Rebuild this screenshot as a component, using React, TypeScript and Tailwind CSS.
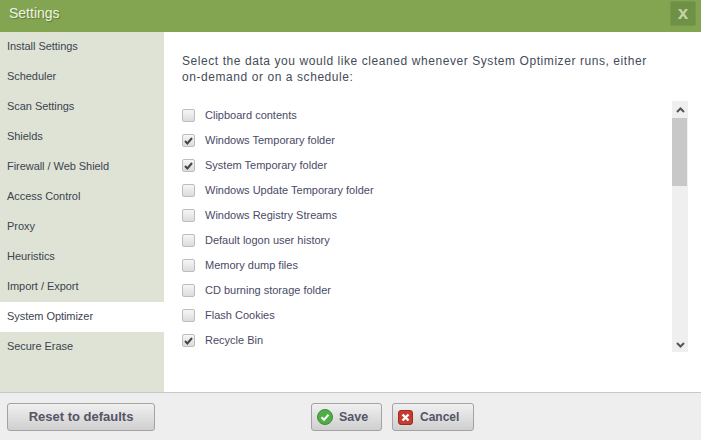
const navItems = [
  'Install Settings',
  'Scheduler',
  'Scan Settings',
  'Shields',
  'Firewall / Web Shield',
  'Access Control',
  'Proxy',
  'Heuristics',
  'Import / Export',
  'System Optimizer',
  'Secure Erase',
];

const cleanItems = [
  { label: 'Clipboard contents', checked: false },
  { label: 'Windows Temporary folder', checked: true },
  { label: 'System Temporary folder', checked: true },
  { label: 'Windows Update Temporary folder', checked: false },
  { label: 'Windows Registry Streams', checked: false },
  { label: 'Default logon user history', checked: false },
  { label: 'Memory dump files', checked: false },
  { label: 'CD burning storage folder', checked: false },
  { label: 'Flash Cookies', checked: false },
  { label: 'Recycle Bin', checked: true },
];

const buttonClass =
  'flex h-[28px] items-center rounded-[3px] border border-[#a3a3a3] bg-gradient-to-b from-[#f0f0f0] to-[#cfcfcf] font-bold text-[#555566]';

function App() {
  return (
    <div className="flex h-[440px] w-[701px] flex-col overflow-hidden bg-white font-['Liberation_Sans',sans-serif]">
      <div className="flex h-[32px] items-start justify-between bg-[#83a552] pl-[9px] pr-[5px]">
        <span className="mt-[4px] text-[14px] leading-[18px] text-[#eef3e4] [text-shadow:1px_1px_1px_#5a7a30]">
          Settings
        </span>
        <button className="mt-[1px] flex h-[25px] w-[26px] items-center justify-center rounded-[2px] border border-[#76964a] bg-[#6f9146] pb-[3px] text-[19px] leading-none font-bold text-[#c3d3a8]">
          x
        </button>
      </div>

      <div className="flex min-h-0 flex-1">
        <div className="w-[164px] bg-[#dfe3d5]">
          {navItems.map((item) => (
            <div
              key={item}
              className={`flex h-[30px] items-center pb-[2px] pl-[7px] text-[11px] tracking-[-0.05px] text-[#3c4450] ${
                item === 'System Optimizer' ? 'bg-white' : ''
              }`}
            >
              {item}
            </div>
          ))}
        </div>

        <div className="min-w-0 flex-1 pl-[18px] pt-[21px]">
          <p className="w-[490px] text-[12px] leading-[16px] tracking-[0.57px] text-[#444c58]">
            Select the data you would like cleaned whenever System Optimizer
            runs, either
            <br />
            on-demand or on a schedule:
          </p>
          <div className="mt-[16px] flex h-[251px]">
            <div className="w-[490px] pt-[2px]">
              {cleanItems.map((item) => (
                <div key={item.label} className="flex h-[25px] items-center">
                  <span className="flex h-[13px] w-[13px] items-center justify-center rounded-[2px] border border-[#bdbdbd] bg-gradient-to-b from-[#f6f6f6] to-[#dcdcdc]">
                    {item.checked && (
                      <svg width="9" height="8" viewBox="0 0 9 8">
                        <path d="M1 4 3.4 6.5 8 1" fill="none" stroke="#444444" strokeWidth="2" />
                      </svg>
                    )}
                  </span>
                  <span className="ml-[10px] text-[11px] text-[#4a4a66]">
                    {item.label}
                  </span>
                </div>
              ))}
            </div>
            <div className="flex w-[16px] flex-col bg-[#efefef]">
              <div className="flex h-[17px] justify-center pt-[6px]">
                <svg width="9" height="6" viewBox="0 0 9 6">
                  <path d="M1 5 4.5 1.5 8 5" fill="none" stroke="#555555" strokeWidth="2" />
                </svg>
              </div>
              <div className="h-[68px] w-[15px] bg-[#c8c8c8]" />
              <div className="mt-auto flex h-[17px] justify-center pt-[7px]">
                <svg width="9" height="6" viewBox="0 0 9 6">
                  <path d="M1 1 4.5 4.5 8 1" fill="none" stroke="#555555" strokeWidth="2" />
                </svg>
              </div>
            </div>
          </div>
        </div>
      </div>

      <div className="flex h-[48px] items-start border-t border-[#c8c8c8] bg-[#eeeeee] pt-[10px]">
        <button className={`${buttonClass} ml-[7px] w-[148px] justify-center text-[13px]`}>
          Reset to defaults
        </button>
        <button className={`${buttonClass} ml-[156px] w-[71px] gap-[6px] pl-[5px] text-[12.5px]`}>
          <svg width="16" height="16" viewBox="0 0 16 16">
            <circle cx="8" cy="8" r="7.5" fill="#4fae45" stroke="#3d8a38" />
            <path d="M4.5 8.2 7 10.7 11.5 5.8" fill="none" stroke="#ffffff" strokeWidth="2" />
          </svg>
          Save
        </button>
        <button className={`${buttonClass} ml-[10px] w-[82px] gap-[7px] pl-[5px] text-[12px]`}>
          <svg width="15" height="15" viewBox="0 0 15 15">
            <rect x="0.5" y="0.5" width="14" height="14" rx="2.5" fill="#c63d2f" stroke="#9c2b20" />
            <path d="M4.5 4.5 10.5 10.5M10.5 4.5 4.5 10.5" stroke="#ffffff" strokeWidth="2.4" />
          </svg>
          Cancel
        </button>
      </div>
    </div>
  );
}

export default App;
